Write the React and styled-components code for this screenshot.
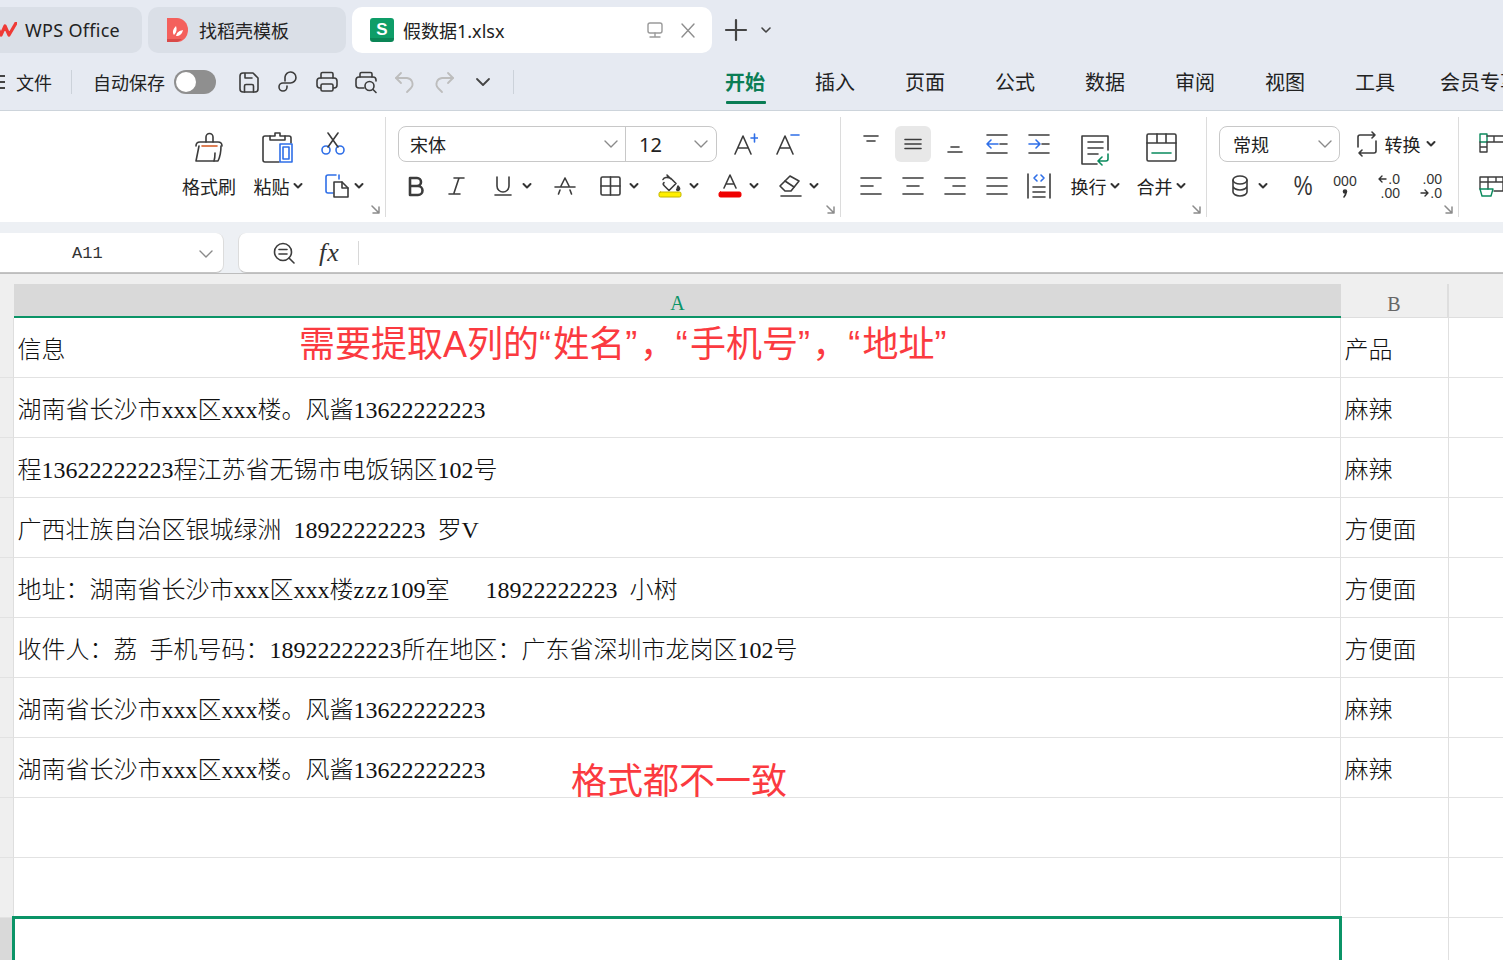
import React from "react";
import styled, { createGlobalStyle } from "styled-components";

const Global = createGlobalStyle`
  html, body { margin: 0; padding: 0; height: 960px; overflow: hidden; background: #fff; }
  body { font-family: "Noto Sans", "Noto Sans CJK SC", sans-serif; color: #222; }
  * { box-sizing: border-box; }
`;

const Page = styled.div`
  width: 1503px;
  height: 960px;
  overflow: hidden;
  display: flex;
  flex-direction: column;
`;

/* title tabs */
const TabBar = styled.div`
  height: 53px;
  flex: none;
  padding-top: 7px;
  background: #e6eaf2;
  display: flex;
  align-items: flex-start;
  gap: 6px;
`;
const Tab = styled.div`
  width: ${(p) => p.$w}px;
  height: 46px;
  display: flex;
  align-items: center;
  flex: none;
  gap: 10px;
  padding-left: ${(p) => p.$pad}px;
  font-size: 18px;
  background: ${(p) => (p.$active ? "#fff" : "#dadfe7")};
  border-radius: ${(p) => (p.$first ? "0 10px 10px 0" : "10px")};
`;
const WpsName = styled.span`
  letter-spacing: 0.3px;
`;
const TabTools = styled.div`
  margin-left: auto;
  padding-right: 16px;
  display: flex;
  align-items: center;
  gap: 16px;
`;
const NewTab = styled.div`
  display: flex;
  align-items: center;
  gap: 12px;
  height: 46px;
  padding-left: 6px;
`;
const SheetLogo = styled.div`
  width: 24px;
  height: 24px;
  border-radius: 3px;
  background: linear-gradient(#0e9d68 0 20px, #0a8556 20px);
  color: #fff;
  font: bold 17px/23px "Liberation Sans", sans-serif;
  text-align: center;
  margin-right: -1px;
`;

const Svg = styled.svg`
  display: block;
  flex: none;
  fill: none;
  stroke: ${(p) => p.$c || "#3c3c3c"};
  stroke-width: ${(p) => p.$sw || 1.6};
  stroke-linecap: round;
  stroke-linejoin: round;
`;
const Icon = ({ s = 24, h, c, sw, children, style }) => (
  <Svg width={s} height={h || s} viewBox={`0 0 ${s} ${h || s}`} $c={c} $sw={sw} style={style}>
    {children}
  </Svg>
);
const Chev = () => (
  <Icon s={10} h={8} sw={2} c="#333">
    <path d="M1.5 2l3.5 3.5L8.5 2" />
  </Icon>
);
const ThinChev = ({ c = "#8a8a8a" }) => (
  <Icon s={14} h={10} sw={1.4} c={c}>
    <path d="M1 2l6 6 6-6" />
  </Icon>
);

/* quick access row */
const Toolbar = styled.div`
  height: 57px;
  flex: none;
  background: #e6eaf2;
  display: flex;
  align-items: center;
  white-space: nowrap;
  & > * {
    flex: none;
  }
`;
const MenuLines = styled.div`
  width: 5px;
  height: 14px;
  margin-right: 11px;
  border-top: 2px solid #444;
  border-bottom: 2px solid #444;
  background: linear-gradient(#444, #444) 0 4px / 100% 2px no-repeat;
`;
const BarLabel = styled.span`
  font-size: 18px;
`;
const BarSep = styled.i`
  width: 1px;
  height: 24px;
  background: #ccd2da;
  margin: ${(p) => p.$m};
`;
const Toggle = styled.div`
  width: 42px;
  height: 24px;
  margin: 0 13px 0 9px;
  border-radius: 12px;
  background: #8f8f8f;
  padding: 2px;
  &::before {
    content: "";
    display: block;
    width: 20px;
    height: 20px;
    border-radius: 50%;
    background: #fff;
  }
`;
const QuickBtn = styled.div`
  width: 39px;
  height: 30px;
  display: flex;
  align-items: center;
  justify-content: center;
`;
const MenuTabs = styled.div`
  display: flex;
  margin-left: 211px;
  height: 57px;
`;
const MenuTab = styled.div`
  width: 90px;
  flex: none;
  padding-top: 16px;
  position: relative;
  font-size: 20px;
  line-height: 28px;
  font-weight: ${(p) => (p.$active ? 700 : 400)};
  color: ${(p) => (p.$active ? "#0a7d55" : "#222")};
  &:last-child {
    margin-left: -5px;
  }
  &::after {
    content: "";
    display: ${(p) => (p.$active ? "block" : "none")};
    position: absolute;
    left: 1px;
    top: 48px;
    width: 40px;
    height: 3px;
    border-radius: 1px;
    background: #0a7d55;
  }
`;

/* ribbon */
const Ribbon = styled.div`
  height: 112px;
  flex: none;
  background: #fff;
  border-top: 1px solid #cdd4db;
  display: flex;
  align-items: flex-start;
  white-space: nowrap;
`;
const Group = styled.div`
  position: relative;
  width: ${(p) => p.$w}px;
  flex: none;
  height: 100px;
  margin-top: 6px;
  padding: 6px 0 0 ${(p) => p.$pad}px;
  border-right: ${(p) => (p.$open ? "none" : "1px solid #dcdcdc")};
  display: flex;
`;
const Launcher = styled.div`
  position: absolute;
  right: 4px;
  bottom: 2px;
`;
const Large = styled.div`
  width: ${(p) => p.$w}px;
  margin-left: ${(p) => p.$ml || 0}px;
  flex: none;
  display: flex;
  flex-direction: column;
  align-items: center;
  height: 84px;
`;
const LargeIcon = styled.div`
  height: 42px;
  padding-top: ${(p) => p.$top || 0}px;
  display: flex;
  align-items: flex-start;
`;
const LargeLabel = styled.div`
  height: 42px;
  display: flex;
  align-items: center;
  gap: 3px;
  font-size: 18px;
`;
const Stack = styled.div`
  display: flex;
  flex-direction: column;
  margin-left: ${(p) => p.$ml || 0}px;
`;
const Row = styled.div`
  height: 42px;
  display: flex;
  align-items: center;
`;
const Tool = styled.div`
  width: ${(p) => p.$w}px;
  margin-left: ${(p) => p.$ml || 0}px;
  height: 36px;
  flex: none;
  display: flex;
  align-items: center;
  justify-content: center;
  gap: ${(p) => p.$gap ?? 7}px;
  border-radius: 6px;
  background: ${(p) => (p.$on ? "#e8e8e8" : "transparent")};
`;
const Combo = styled.div`
  height: 36px;
  width: ${(p) => p.$w}px;
  display: flex;
  border: 1px solid #c8c8c8;
  border-radius: 8px;
`;
const ComboPart = styled.div`
  width: ${(p) => p.$w}px;
  flex: none;
  display: flex;
  align-items: center;
  justify-content: space-between;
  padding: 0 ${(p) => p.$pr || 6}px 0 ${(p) => p.$pl}px;
  font-size: ${(p) => p.$fs || 18}px;
  border-right: ${(p) => (p.$div ? "1px solid #c8c8c8" : "none")};
`;

/* formula bar */
const FormulaArea = styled.div`
  height: 51px;
  flex: none;
  padding-top: 11px;
  background: #edf0f4;
  display: flex;
  gap: 14px;
`;
const NameBox = styled.div`
  width: 224px;
  height: 40px;
  background: #fff;
  border-radius: 0 8px 8px 0;
  border-bottom: 1px solid #c4c4c4;
  border-right: 1px solid #dcdcdc;
  display: flex;
  align-items: center;
  justify-content: space-between;
  padding: 2px 10px 0 72px;
  font: 17px "Liberation Mono", monospace;
  color: #333;
`;
const FormulaBox = styled.div`
  flex: 1;
  height: 40px;
  background: #fff;
  border-radius: 8px 0 0 8px;
  border-bottom: 1px solid #c4c4c4;
  border-left: 1px solid #dcdcdc;
  display: flex;
  align-items: center;
  padding-left: 33px;
`;
const Fx = styled.span`
  font: italic 26px "Liberation Serif", serif;
  letter-spacing: 1px;
  color: #333;
  margin-left: 23px;
  width: 36px;
`;
const FxSep = styled.i`
  width: 1px;
  height: 24px;
  background: #d8d8d8;
  margin-left: 3px;
`;

/* sheet */
const Sheet = styled.div`
  flex: 1;
  min-height: 0;
  background: #efefef;
  border-top: 1px solid #bdbdbd;
  padding-top: 10px;
  font-family: "Liberation Serif", "Noto Sans CJK SC", serif;
`;
const HeaderRow = styled.div`
  display: grid;
  grid-template-columns: 14px 1327px 108px 1fr;
  height: 34px;
`;
const ColHead = styled.div`
  display: flex;
  align-items: flex-end;
  justify-content: center;
  padding-bottom: 1px;
  font-size: 20px;
  line-height: 24px;
  color: ${(p) => (p.$active ? "#0b9467" : "#666")};
  background: ${(p) => (p.$active ? "#d9d9d9" : "#efefef")};
  border-bottom: ${(p) => (p.$active ? "2px solid #0b9467" : "1px solid #dedede")};
  border-right: ${(p) => (p.$line ? "2px solid #dedede" : "none")};
`;
const Corner = styled.div`
  border-bottom: 1px solid transparent;
`;
const Body = styled.div`
  background: #fff;
`;
const SheetRow = styled.div`
  display: grid;
  grid-template-columns: 14px 1327px 108px 1fr;
  height: 60px;
`;
const RowHead = styled.div`
  background: ${(p) => (p.$active ? "#d9d9d9" : "#efefef")};
  border-right: ${(p) => (p.$active ? "none" : "1px solid #dedede")};
  border-bottom: 1px solid #e2e2e2;
`;
const Cell = styled.div`
  position: relative;
  padding: 17px 0 0 3.5px;
  font-size: 24px;
  line-height: 30px;
  font-weight: 300;
  white-space: pre;
  word-spacing: 6px;
  color: #111;
  border-bottom: 1px solid #e2e2e2;
  border-right: ${(p) => (p.$end ? "none" : "1px solid #e0e0e0")};
`;
const Wide = styled.span`
  letter-spacing: 1.33px;
`;
const Selection = styled.div`
  position: absolute;
  left: -2px;
  top: -2px;
  right: -2px;
  height: 70px;
  border: 3px solid #0b9467;
`;
const Note = styled.span`
  position: absolute;
  left: ${(p) => p.$x}px;
  top: ${(p) => p.$y}px;
  font-family: "Liberation Sans", "Noto Sans CJK SC", sans-serif;
  font-size: 36px;
  line-height: 44px;
  font-weight: 400;
  color: #fb3a40;
  word-spacing: 0;
`;
const Quote = styled.span`
  letter-spacing: 2.3px;
`;

/* icons */
const blue = "#2f6fe8";

const WpsLogo = () => (
  <Icon s={17} h={16} c="#ef3a36" sw={3.2} style={{ marginRight: -2 }}>
    <path d="M-4 2l5 11 4-9 4 9 7-12" />
  </Icon>
);
const ShellLogo = () => (
  <svg width="22" height="24" viewBox="0 0 22 24">
    <path d="M0 0h10a11 12 0 0 1 0 24H0z" fill="#f4605c" />
    <path d="M0 21h15a11 12 0 0 1-5 3H0z" fill="#d94a48" />
    <path d="M7 17c-2-3-1-6 2-9 1 3 1 6-2 9zm2 1c1-4 3-5 7-6-1 4-3 6-7 6z" fill="#fff" />
  </svg>
);
const quick = [
  <Icon><path d="M3 6a3 3 0 0 1 3-3h10l5 5v11a3 3 0 0 1-3 3H6a3 3 0 0 1-3-3z" /><path d="M8 3.5V8h7" /><path d="M7.5 22v-6a1.5 1.5 0 0 1 1.5-1.5h6a1.5 1.5 0 0 1 1.5 1.5v6" /></Icon>,
  <Icon><path d="M9 11V7a5.5 5.5 0 1 1 5.5 6H7a4 4 0 1 0 4 4v-1" /></Icon>,
  <Icon><path d="M6 8V4a1.5 1.5 0 0 1 1.5-1.5h9A1.5 1.5 0 0 1 18 4v4" /><rect x="2" y="8" width="20" height="10" rx="3" /><rect x="6" y="14" width="12" height="7" rx="1.5" fill="#e6eaf2" /></Icon>,
  <Icon><path d="M6 7V4a1.5 1.5 0 0 1 1.5-1.5h9A1.5 1.5 0 0 1 18 4v3" /><path d="M10 18H5a3 3 0 0 1-3-3v-5a3 3 0 0 1 3-3h14a3 3 0 0 1 3 3v1" /><circle cx="15.5" cy="16" r="4.5" /><path d="M19 19.5l3 3" /></Icon>,
  <Icon c="#bdbdbd" sw={1.8}><path d="M8 3L3 8l5 5" /><path d="M3 8h11a6 6 0 0 1 4 10l-4 4" /></Icon>,
  <Icon c="#bdbdbd" sw={1.8}><path d="M16 3l5 5-5 5" /><path d="M21 8H10a6 6 0 0 0-4 10l4 4" /></Icon>,
  <Icon s={16} h={10} sw={1.8} c="#444"><path d="M2 2l6 6 6-6" /></Icon>,
];

const Brush = () => (
  <Icon s={30}>
    <path d="M12 10V5a3.5 3.5 0 0 1 7 0v5" />
    <path d="M2 14c0-3 2-4 4-4h18c2 0 4 1 4 4" />
    <path d="M5 14L2 29h22c2-4 3-9 3-15" />
    <path d="M8 14h15" stroke="#d4561e" />
    <path d="M20 29c1-3 1-6 1-8" />
  </Icon>
);
const Paste = () => (
  <Icon s={32}>
    <path d="M8 4H3a2 2 0 0 0-2 2v22a2 2 0 0 0 2 2h14" />
    <path d="M23 4h4a2 2 0 0 1 2 2v5" />
    <path d="M8 8V4h5V1h5v3h5v4z" />
    <rect x="18" y="12" width="12" height="18" stroke={blue} />
    <rect x="21" y="15" width="6" height="12" stroke={blue} />
  </Icon>
);
const Scissors = () => (
  <Icon c={blue} s={26}>
    <circle cx="6" cy="19" r="4" /><circle cx="20" cy="19" r="4" />
    <path d="M8 16L18 2" stroke="#3c3c3c" /><path d="M18 16L8 2" stroke="#3c3c3c" />
  </Icon>
);
const Copy = () => (
  <Icon s={26}>
    <path d="M12 2H4a2 2 0 0 0-2 2v14a2 2 0 0 0 2 2h5" stroke={blue} />
    <path d="M10 9h8l6 6v9H10z" /><path d="M18 9v6h6" />
    <path d="M15 2v4" stroke={blue} />
  </Icon>
);
const Arrow = () => (
  <Icon s={10} c="#8c8c8c" sw={1.5}><path d="M1 1l7 7M8 2v6H2" /></Icon>
);
const Bold = () => <Icon><path d="M6 4h7a4 4 0 0 1 0 8H6zM6 12h8a4.5 4.5 0 0 1 0 9H6z" strokeWidth="2.6" /></Icon>;
const Italic = () => <Icon><path d="M9 4h10M14 4L9 19M4 20h11" /></Icon>;
const Under = () => <Icon><path d="M6 3v9a6 6 0 0 0 12 0V3" /><path d="M4 21h16" /></Icon>;
const Strike = () => <Icon><path d="M12 4L8 12M12 4l4 8M2 13h20M7 16l-1.5 4M17 16l1.5 4" /></Icon>;
const Borders = () => <Icon><rect x="3" y="3" width="19" height="18" rx="1.5" /><path d="M12.5 3v18M3 12h19" /></Icon>;
const Fill = () => (
  <Icon h={26}>
    <path d="M5 6.5c1-2 4-3 8-1l5 5-7 7-5-5c-1-1-1-2 0-3M9 2l4 4" />
    <path d="M20 13c1 1 2 3 1 4s-3 0-2-1z" fill="#333" />
    <rect x="1" y="19" width="22" height="5" rx="1.5" fill="#ffef00" stroke="#c2b400" strokeWidth="1" />
  </Icon>
);
const FontColor = () => (
  <Icon h={26}>
    <path d="M6 15l6-13 6 13M8 11h8" />
    <rect x="1" y="19" width="22" height="5" rx="1.5" fill="#ef0000" stroke="#ef0000" strokeWidth="1" />
  </Icon>
);
const Eraser = () => (
  <Icon h={26}><path d="M2 13L12 3l9 5-8 10H7z" /><path d="M7 8l9 6M3 23h20" /></Icon>
);
const GrowA = ({ plus }) => (
  <Icon s={26}>
    <path d="M3 23l8-18 8 18M6 17h10" />
    {plus ? <path d="M19 7h7M22.5 3v8" stroke={blue} /> : <path d="M17 4h8" stroke={blue} />}
  </Icon>
);
const lines = (a) => a.map(([x1, x2, y], i) => <path key={i} d={`M${x1} ${y}H${x2}`} />);
const Lines = ({ d }) => <Icon>{lines(d)}</Icon>;
const Indent = ({ back }) => (
  <Icon>
    <path d="M2 3h20M2 21h20M15 12h7" />
    <path d={back ? "M13 12H2M6 8l-4 4 4 4" : "M2 12h11M9 8l4 4-4 4"} stroke={blue} />
  </Icon>
);
const Distribute = () => (
  <Icon s={28}>
    <path d="M3 2v24M25 2v24M8 15h12M8 20h12M8 25h12" />
    <path d="M12 3L9 6l3 3M16 3l3 3-3 3" stroke={blue} />
  </Icon>
);
const Wrap = () => (
  <Icon s={34}>
    <path d="M30 18V4H4v28h15" />
    <path d="M10 10h15M10 16h15M10 22h10" />
    <path d="M30 22v5a2 2 0 0 1-2 2h-7M24 25l-4 4 4 4" stroke="#0a8a5d" />
  </Icon>
);
const Merge = () => (
  <Icon s={32}>
    <rect x="2" y="2" width="29" height="27" rx="1.5" />
    <path d="M2 11h29M12 2v9M21 2v9" />
    <path d="M7 21h19" stroke="#0a8a5d" />
  </Icon>
);
const Convert = () => (
  <Icon s={26}>
    <path d="M4 16V6a2 2 0 0 1 2-2h15M18 1l3 3-3 3" />
    <path d="M22 10v10a2 2 0 0 1-2 2H5M8 19l-3 3 3 3" />
  </Icon>
);
const Db = () => (
  <Icon>
    <ellipse cx="12" cy="6" rx="7" ry="4" />
    <path d="M5 6v12c0 2 3 4 7 4s7-2 7-4V6M5 12c0 2 3 4 7 4s7-2 7-4" />
  </Icon>
);
const Zoomer = () => (
  <Icon><circle cx="11" cy="11" r="8.5" /><path d="M7 8.5h8M7 13h8M17 17l5 5" /></Icon>
);
const Percent = styled.span`
  display: block;
  font: 27px/1 "Liberation Sans", sans-serif;
  color: #333;
  transform: scaleX(0.78);
`;
const NumFmt = styled.div`
  display: flex;
  flex-direction: column;
  align-items: center;
  gap: 2px;
  font: 14px/12px "Liberation Sans", sans-serif;
  color: #333;
`;
const NumLine = styled.div`
  display: flex;
  align-items: center;
  justify-content: flex-end;
  gap: 1px;
  height: 12px;
  width: 24px;
`;
const ThousandsTail = () => (
  <Icon s={6} h={9} sw={1.6} c="#333">
    <circle cx="3" cy="2.5" r="1.5" fill="#333" />
    <path d="M4 3c0 2-1 4-2 5" />
  </Icon>
);
const ArrowLeft = () => <Icon s={9} h={10} sw={1.4} c="#333"><path d="M8 5H1M4 2L1 5l3 3" /></Icon>;
const ArrowRight = () => <Icon s={9} h={10} sw={1.4} c="#333"><path d="M1 5h7M5 2l3 3-3 3" /></Icon>;
const Screen = () => (
  <Icon s={18} c="#9a9a9a" sw={1.4}><rect x="2" y="2" width="14" height="10" rx="2" /><path d="M9 12v3M4 16h10" /></Icon>
);
const Close = () => (
  <Icon s={16} c="#8e8e8e" sw={1.4}><path d="M2 2l12 13M14 2L2 15" /></Icon>
);

const rows = [
  {
    a: "信息",
    b: "产品",
    note: {
      x: 285,
      y: 5,
      t: (
        <>
          需要提取A列的<Quote>“</Quote>姓名<Quote>”</Quote>，<Quote>“</Quote>手机号<Quote>”</Quote>，<Quote>“</Quote>地址<Quote>”</Quote>
        </>
      ),
    },
  },
  { a: "湖南省长沙市xxx区xxx楼。风酱13622222223", b: "麻辣" },
  { a: "程13622222223程江苏省无锡市电饭锅区102号", b: "麻辣" },
  { a: "广西壮族自治区银城绿洲 18922222223 罗V", b: "方便面" },
  {
    a: (
      <>
        地址：湖南省长沙市xxx区xxx楼<Wide>zzz</Wide>109室   18922222223 小树
      </>
    ),
    b: "方便面",
  },
  { a: "收件人：荔 手机号码：18922222223所在地区：广东省深圳市龙岗区102号", b: "方便面" },
  { a: "湖南省长沙市xxx区xxx楼。风酱13622222223", b: "麻辣" },
  { a: "湖南省长沙市xxx区xxx楼。风酱13622222223", b: "麻辣", note: { x: 557, y: 22, t: "格式都不一致" } },
  { a: "", b: "" },
  { a: "", b: "" },
  { a: "", b: "", selected: true },
];

const menu = ["开始", "插入", "页面", "公式", "数据", "审阅", "视图", "工具", "会员专享"];

export default function App() {
  return (
    <Page>
      <Global />
      <TabBar>
        <Tab $w={142} $pad={0} $first>
          <WpsLogo />
          <WpsName>WPS Office</WpsName>
        </Tab>
        <Tab $w={198} $pad={19}>
          <ShellLogo />
          <span>找稻壳模板</span>
        </Tab>
        <Tab $w={360} $pad={18} $active>
          <SheetLogo>S</SheetLogo>
          <span>假数据1.xlsx</span>
          <TabTools>
            <Screen />
            <Close />
          </TabTools>
        </Tab>
        <NewTab>
          <Icon s={24} sw={2.2} c="#444"><path d="M12 2v20M2 12h20" /></Icon>
          <Icon s={12} h={8} sw={1.6} c="#444"><path d="M2 2l4 4 4-4" /></Icon>
        </NewTab>
      </TabBar>

      <Toolbar>
        <MenuLines />
        <BarLabel>文件</BarLabel>
        <BarSep $m="0 21px 0 19px" />
        <BarLabel>自动保存</BarLabel>
        <Toggle />
        {quick.map((q, i) => (
          <QuickBtn key={i}>{q}</QuickBtn>
        ))}
        <BarSep $m="0 0 0 11px" />
        <MenuTabs>
          {menu.map((m, i) => (
            <MenuTab key={m} $active={i === 0}>{m}</MenuTab>
          ))}
        </MenuTabs>
      </Toolbar>

      <Ribbon>
        <Group $w={386} $pad={182}>
          <Large $w={54}>
            <LargeIcon $top={9}><Brush /></LargeIcon>
            <LargeLabel>格式刷</LargeLabel>
          </Large>
          <Large $w={50} $ml={17}>
            <LargeIcon $top={9}><Paste /></LargeIcon>
            <LargeLabel>粘贴<Chev /></LargeLabel>
          </Large>
          <Stack $ml={17}>
            <Row><Tool $w={26}><Scissors /></Tool></Row>
            <Row><Tool $w={48} $gap={4}><Copy /><Chev /></Tool></Row>
          </Stack>
          <Launcher><Arrow /></Launcher>
        </Group>

        <Group $w={455} $pad={12}>
          <Stack>
            <Row>
              <Combo $w={319}>
                <ComboPart $w={227} $pl={11} $pr={7} $div>宋体<ThinChev /></ComboPart>
                <ComboPart $w={91} $pl={13} $pr={9} $fs={20}>12<ThinChev /></ComboPart>
              </Combo>
              <Tool $w={42} $ml={7}><GrowA plus /></Tool>
              <Tool $w={42}><GrowA /></Tool>
            </Row>
            <Row>
              <Tool $w={36}><Bold /></Tool>
              <Tool $w={46}><Italic /></Tool>
              <Tool $w={63}><Under /><Chev /></Tool>
              <Tool $w={44}><Strike /></Tool>
              <Tool $w={62}><Borders /><Chev /></Tool>
              <Tool $w={59}><Fill /><Chev /></Tool>
              <Tool $w={60}><FontColor /><Chev /></Tool>
              <Tool $w={60}><Eraser /><Chev /></Tool>
            </Row>
          </Stack>
          <Launcher><Arrow /></Launcher>
        </Group>

        <Group $w={366} $pad={9}>
          <Stack>
            <Row>
              <Tool $w={42}><Lines d={[[5, 19, 4], [8, 16, 9]]} /></Tool>
              <Tool $w={36} $ml={3} $on><Lines d={[[4, 20, 7.5], [4, 20, 12], [4, 20, 16.5]]} /></Tool>
              <Tool $w={42} $ml={3}><Lines d={[[8, 16, 15], [5, 19, 20]]} /></Tool>
              <Tool $w={42}><Indent back /></Tool>
              <Tool $w={42}><Indent /></Tool>
            </Row>
            <Row>
              <Tool $w={42}><Lines d={[[2, 22, 4], [2, 14, 12], [2, 22, 20]]} /></Tool>
              <Tool $w={42}><Lines d={[[2, 22, 4], [6, 18, 12], [2, 22, 20]]} /></Tool>
              <Tool $w={42}><Lines d={[[2, 22, 4], [10, 22, 12], [2, 22, 20]]} /></Tool>
              <Tool $w={42}><Lines d={[[2, 22, 4], [2, 22, 12], [2, 22, 20]]} /></Tool>
              <Tool $w={42}><Distribute /></Tool>
            </Row>
          </Stack>
          <Large $w={66} $ml={2}>
            <LargeIcon $top={9}><Wrap /></LargeIcon>
            <LargeLabel>换行<Chev /></LargeLabel>
          </Large>
          <Large $w={66}>
            <LargeIcon $top={9}><Merge /></LargeIcon>
            <LargeLabel>合并<Chev /></LargeLabel>
          </Large>
          <Launcher><Arrow /></Launcher>
        </Group>

        <Group $w={252} $pad={12}>
          <Stack>
            <Row>
              <Combo $w={121}>
                <ComboPart $w={119} $pl={13} $pr={7}>常规<ThinChev /></ComboPart>
              </Combo>
              <Tool $w={105} $gap={5} $ml={2}>
                <Convert /><BarLabel>转换</BarLabel><Chev />
              </Tool>
            </Row>
            <Row>
              <Tool $w={58} $gap={6}><Db /><Chev /></Tool>
              <Tool $w={52}><Percent>%</Percent></Tool>
              <Tool $w={32}>
                <NumFmt>
                  <span>000</span>
                  <ThousandsTail />
                </NumFmt>
              </Tool>
              <Tool $w={54}>
                <NumFmt>
                  <NumLine><ArrowLeft />.0</NumLine>
                  <NumLine>.00</NumLine>
                </NumFmt>
              </Tool>
              <Tool $w={30}>
                <NumFmt>
                  <NumLine>.00</NumLine>
                  <NumLine><ArrowRight />.0</NumLine>
                </NumFmt>
              </Tool>
            </Row>
          </Stack>
          <Launcher><Arrow /></Launcher>
        </Group>

        <Group $w={60} $pad={20} $open>
          <Stack>
            <Row>
              <Icon s={24} sw={1.4}>
                <rect x="1" y="2" width="7" height="8" stroke="#0a8a5d" />
                <path d="M8 4h16M8 10h16M15 4v6M1 10v10h7V10M1 15h7" />
              </Icon>
            </Row>
            <Row>
              <Icon s={24} sw={1.4}>
                <path d="M1 15V3h23v14h-9M1 8h23M9 3v12M17 3v5" />
                <path d="M1 15h13l-2 7H3z" stroke="#0a8a5d" />
              </Icon>
            </Row>
          </Stack>
        </Group>
      </Ribbon>

      <FormulaArea>
        <NameBox>
          <span>A11</span>
          <ThinChev />
        </NameBox>
        <FormulaBox>
          <Zoomer />
          <Fx>fx</Fx>
          <FxSep />
        </FormulaBox>
      </FormulaArea>

      <Sheet>
        <HeaderRow>
          <Corner />
          <ColHead $active>A</ColHead>
          <ColHead $line>B</ColHead>
          <ColHead />
        </HeaderRow>
        <Body>
          {rows.map((r, i) => (
            <SheetRow key={i}>
              <RowHead $active={r.selected} />
              <Cell>
                {r.a}
                {r.note && <Note $x={r.note.x} $y={r.note.y}>{r.note.t}</Note>}
                {r.selected && <Selection />}
              </Cell>
              <Cell>{r.b}</Cell>
              <Cell $end />
            </SheetRow>
          ))}
        </Body>
      </Sheet>
    </Page>
  );
}
